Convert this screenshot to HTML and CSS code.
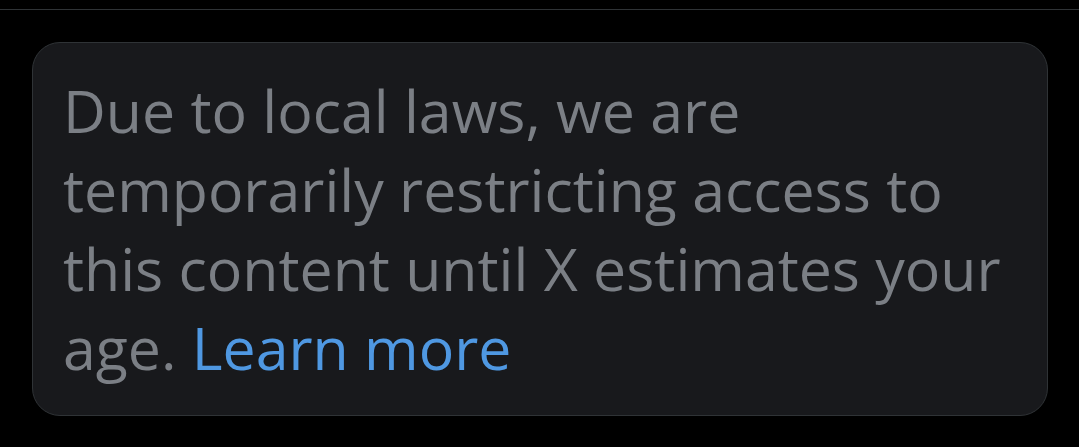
FILE: index.html
```html
<!DOCTYPE html>
<html lang="en">
<head>
    <meta charset="UTF-8">
    <meta name="viewport" content="width=device-width, initial-scale=1.0">
    <title>Restricted content</title>
    <link rel="stylesheet" href="styles.css">
</head>
<body>
    <div class="top-bar"></div>

    <div class="notice">
        <p class="notice-text">
            Due to local laws, we are temporarily restricting access to this content until X estimates your age.
            <a href="#" class="learn-more">Learn more</a>
        </p>
    </div>
</body>
</html>
```

FILE: styles.css
```css
/* General Styling */
body {
    margin: 0;
    padding: 0;
    background: #000;
    font-family: "Open Sans", "Noto Sans", Arial, sans-serif;
}

.top-bar {
    height: 9px;
    border-bottom: 1px solid #2f3336;
}

/* Notice card */
.notice {
    margin: 32px 31px 0 32px;
    padding: 28px 40px 28px 30px;
    background: #18191c;
    border: 1px solid #2f3336;
    border-radius: 28px;
}

.notice-text {
    margin: 0;
    color: #7b7f85;
    font-size: 59px;
    line-height: 79px;
}

.learn-more {
    color: #4f98e2;
    text-decoration: none;
}
```
